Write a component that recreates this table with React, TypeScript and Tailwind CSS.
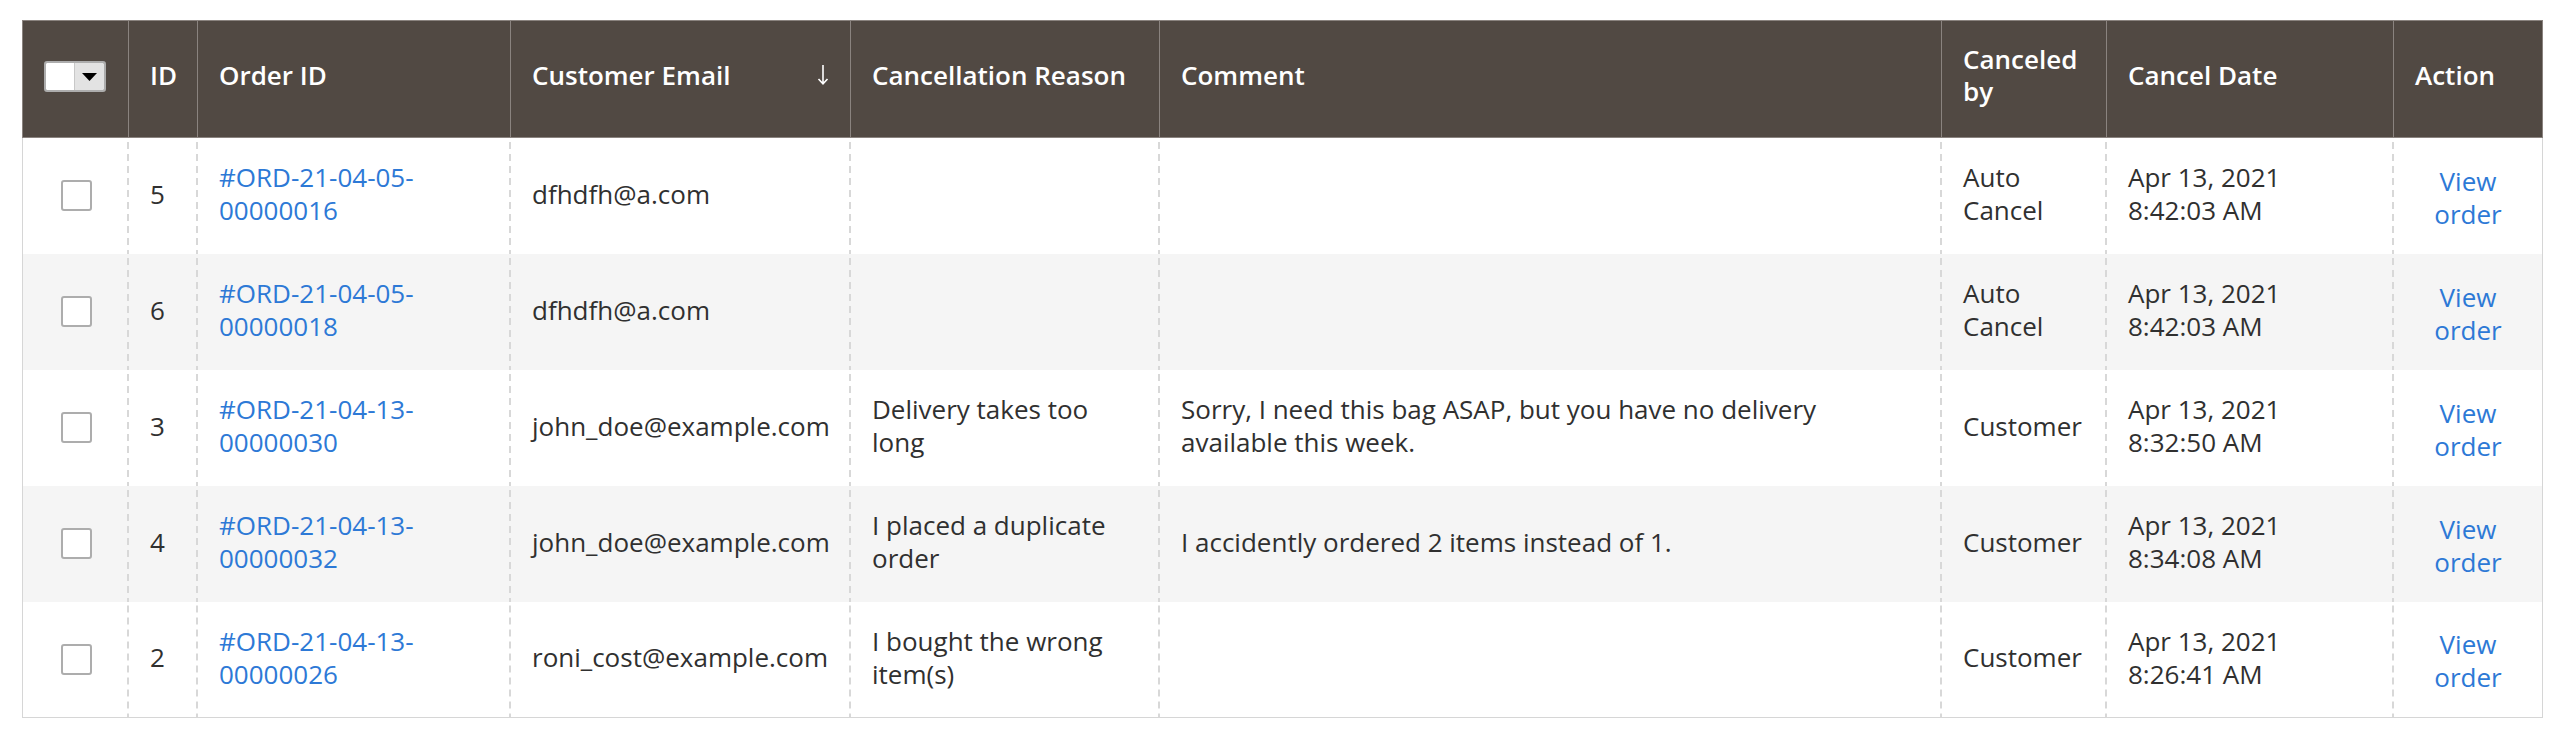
import React from "react";

type Row = {
  id: number;
  order: [string, string];
  email: string;
  reason: string;
  comment: string;
  by: string;
  date: string;
  time: string;
};

const rows: Row[] = [
  { id: 5, order: ["#ORD-21-04-05-", "00000016"], email: "dfhdfh@a.com", reason: "", comment: "", by: "Auto Cancel", date: "Apr 13, 2021", time: "8:42:03 AM" },
  { id: 6, order: ["#ORD-21-04-05-", "00000018"], email: "dfhdfh@a.com", reason: "", comment: "", by: "Auto Cancel", date: "Apr 13, 2021", time: "8:42:03 AM" },
  {
    id: 3,
    order: ["#ORD-21-04-13-", "00000030"],
    email: "john_doe@example.com",
    reason: "Delivery takes too long",
    comment: "Sorry, I need this bag ASAP, but you have no delivery available this week.",
    by: "Customer",
    date: "Apr 13, 2021",
    time: "8:32:50 AM",
  },
  {
    id: 4,
    order: ["#ORD-21-04-13-", "00000032"],
    email: "john_doe@example.com",
    reason: "I placed a duplicate order",
    comment: "I accidently ordered 2 items instead of 1.",
    by: "Customer",
    date: "Apr 13, 2021",
    time: "8:34:08 AM",
  },
  {
    id: 2,
    order: ["#ORD-21-04-13-", "00000026"],
    email: "roni_cost@example.com",
    reason: "I bought the wrong item(s)",
    comment: "",
    by: "Customer",
    date: "Apr 13, 2021",
    time: "8:26:41 AM",
  },
];

const th = "bg-[#514943] text-white font-semibold text-left align-middle px-[21px] pb-[8px] h-[118px] leading-[32px] border-t border-b border-r border-[#8a837f]";
// dashed column divider drawn as a repeating gradient on the right edge
const dash = "bg-[linear-gradient(#d8d8d8_55%,transparent_55%)] bg-[length:2px_12px] bg-right bg-repeat-y";
const td = `px-[21px] pb-[4px] h-[116px] align-middle ${dash}`;

function MassSelect() {
  return (
    <div className="inline-flex h-[31px] w-[62px] rounded-[3px] border-2 border-[#adadad] overflow-hidden align-middle">
      <span className="w-[29px] bg-white border-r border-[#c8c8c8]" />
      <span className="flex-1 bg-[#e3e3e3] flex items-center justify-center">
        <svg width="15" height="8" viewBox="0 0 15 8">
          <path d="M0 0 H15 L7.5 8 Z" fill="#000" />
        </svg>
      </span>
    </div>
  );
}

function SortArrow() {
  return (
    <svg width="12" height="20" viewBox="0 0 12 20" className="shrink-0">
      <path d="M6 0 V19 M1.5 14 L6 18.8 L10.5 14" stroke="#fff" strokeWidth="1.6" fill="none" />
    </svg>
  );
}

export default function App() {
  return (
    <div className="min-h-screen bg-white pl-[22px] pt-[20px]">
      <table className="table-fixed border-separate border-spacing-0 w-[2521px] font-['Open_Sans',sans-serif] text-[26px] leading-[33px] text-[#303030]">
        <colgroup>
          <col className="w-[107px]" />
          <col className="w-[69px]" />
          <col className="w-[313px]" />
          <col className="w-[340px]" />
          <col className="w-[309px]" />
          <col className="w-[782px]" />
          <col className="w-[165px]" />
          <col className="w-[287px]" />
          <col className="w-[149px]" />
        </colgroup>
        <thead>
          <tr>
            <th className={`${th} border-l text-center`}>
              <MassSelect />
            </th>
            <th className={th}>ID</th>
            <th className={th}>Order ID</th>
            <th className={th}>
              <div className="flex items-center justify-between">
                <span>Customer Email</span>
                <SortArrow />
              </div>
            </th>
            <th className={th}>Cancellation Reason</th>
            <th className={th}>Comment</th>
            <th className={th}>Canceled by</th>
            <th className={th}>Cancel Date</th>
            <th className={th}>Action</th>
          </tr>
        </thead>
        <tbody>
          {rows.map((r, i) => {
            const last = i === rows.length - 1;
            const bg = i % 2 === 1 ? "bg-[#f5f5f5]" : "bg-white";
            const bottom = last ? " border-b border-[#d6d6d6]" : "";
            return (
              <tr key={r.id} className={bg}>
                <td className={`${td} border-l border-[#d6d6d6] text-center${bottom}`}>
                  <span className="inline-block h-[31px] w-[31px] rounded-[3px] border-2 border-solid border-[#adadad] bg-white align-middle" />
                </td>
                <td className={`${td}${bottom}`}>{r.id}</td>
                <td className={`${td}${bottom}`}>
                  <a className="text-[#2d79d6] cursor-pointer">
                    {r.order[0]}
                    <wbr />
                    {r.order[1]}
                  </a>
                </td>
                <td className={`${td} whitespace-nowrap${bottom}`}>{r.email}</td>
                <td className={`${td}${bottom}`}>{r.reason}</td>
                <td className={`${td}${bottom}`}>{r.comment}</td>
                <td className={`${td}${bottom}`}>{r.by}</td>
                <td className={`${td}${bottom}`}>
                  <span className="block">{r.date}</span>
                  <span className="block">{r.time}</span>
                </td>
                <td className={`px-[21px] pt-[3px] h-[116px] align-middle border-r border-[#d6d6d6] text-center${bottom}`}>
                  <a className="text-[#2d79d6] cursor-pointer">View order</a>
                </td>
              </tr>
            );
          })}
        </tbody>
      </table>
    </div>
  );
}
